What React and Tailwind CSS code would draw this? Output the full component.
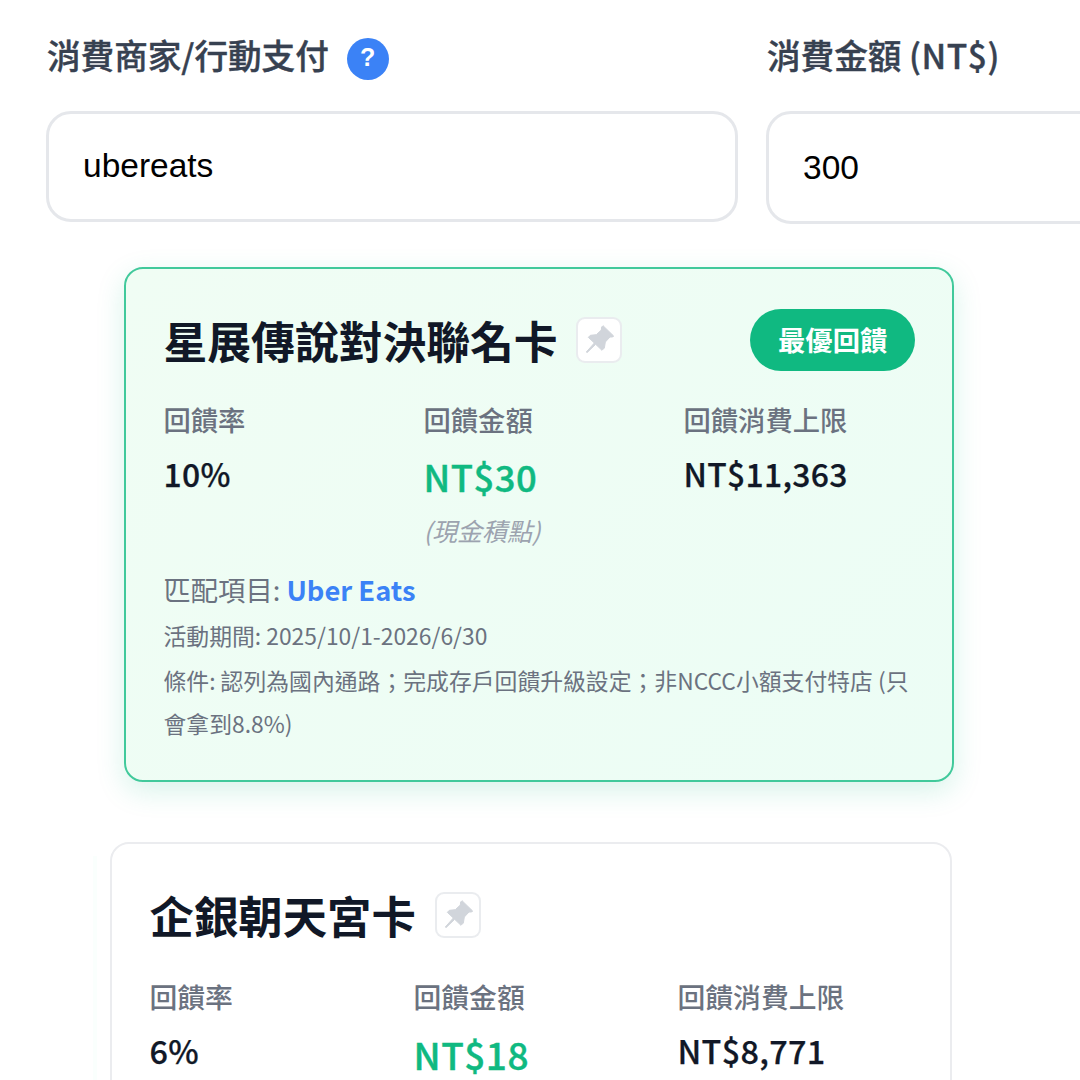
function PinIcon() {
  return (
    <svg width="30" height="30" viewBox="0 0 90 90" fill="currentColor" stroke="currentColor" strokeWidth="3" strokeLinejoin="round">
      <path d="M57 2 L89 33 L86 36 L78 36 L64 51 L61 69 L54 76 L35 58 L9 83 L7 81 L31 54 L13 37 L19 31 L37 29 L52 15 L53 6 Z" />
    </svg>
  );
}

function PinButton() {
  return (
    <button className="flex h-[46px] w-[46px] shrink-0 items-center justify-center rounded-[9px] border-2 border-[#e5e7eb]/80 bg-white text-[#d1d5db]">
      <PinIcon />
    </button>
  );
}

function BestCard() {
  return (
    <div className="mt-[43px] ml-[124px] h-[515px] w-[830px] rounded-[19px] border-2 border-[#41c99b] bg-linear-135 from-[#f0fdf4] to-[#ecfdf5] pt-[38px] pl-[37.5px] shadow-[0_9px_28px_rgba(16,185,129,0.17)]">
      <div className="flex h-[66px] items-center">
        <h3 className="text-[43.8px] leading-[66px] font-bold text-[#111827]">星展傳說對決聯名卡</h3>
        <div className="ml-[18.5px]">
          <PinButton />
        </div>
        <span className="ml-[128px] flex h-[62px] w-[165px] items-center justify-center rounded-full bg-[#10b981] pb-px text-[27.3px] font-bold text-white">
          最優回饋
        </span>
      </div>

      <div className="mt-[26px] grid grid-cols-[260px_260px_230px] text-[#111827]">
        <div>
          <div className="text-[27.3px] leading-[40px] font-medium text-[#6b7280]">回饋率</div>
          <div className="mt-[9px] text-[31.9px] leading-[50px] font-medium tracking-[0.3px] [-webkit-text-stroke:0.25px]">
            10%
          </div>
        </div>
        <div>
          <div className="text-[27.3px] leading-[40px] font-medium text-[#6b7280]">回饋金額</div>
          <div className="mt-[9px] text-[36.4px] leading-[56px] font-medium tracking-[0.5px] text-[#10b981] [-webkit-text-stroke:0.4px]">
            NT$30
          </div>
          <div className="mt-[6px] text-[25px] leading-[40px] text-[#9ca3af] italic">(現金積點)</div>
        </div>
        <div>
          <div className="text-[27.3px] leading-[40px] font-medium text-[#6b7280]">回饋消費上限</div>
          <div className="mt-[9px] text-[31.9px] leading-[50px] font-medium tracking-[0.3px] [-webkit-text-stroke:0.25px]">
            NT$11,363
          </div>
        </div>
      </div>

      <div className="mt-[17px] text-[27.3px] leading-[44px] text-[#6b7280]">
        匹配項目: <span className="font-bold text-[#3b82f6]">Uber Eats</span>
      </div>
      <div className="mt-[3px] text-[22.83px] leading-[43px] text-[#6b7280]">活動期間: 2025/10/1-2026/6/30</div>
      <div className="mt-[2px] text-[22.83px] leading-[43px] text-[#6b7280]">
        條件: 認列為國內通路；完成存戶回饋升級設定；非NCCC小額支付特店 (只
        <br />
        會拿到8.8%)
      </div>
    </div>
  );
}

function CardItem() {
  return (
    <div className="h-[600px] w-[842px] rounded-[19px] border-2 border-[#ebecef] bg-white pt-[37px] pl-[37.5px]">
      <div className="flex h-[67px] items-center">
        <h3 className="text-[44.4px] leading-[67px] font-bold text-[#111827]">企銀朝天宮卡</h3>
        <div className="ml-[19.5px]">
          <PinButton />
        </div>
      </div>

      <div className="mt-[28px] grid grid-cols-[264px_264px_240px] text-[#111827]">
        <div>
          <div className="text-[27.8px] leading-[40px] font-medium text-[#6b7280]">回饋率</div>
          <div className="mt-[9px] text-[32.4px] leading-[50px] font-medium tracking-[0.3px] [-webkit-text-stroke:0.25px]">
            6%
          </div>
        </div>
        <div>
          <div className="text-[27.8px] leading-[40px] font-medium text-[#6b7280]">回饋金額</div>
          <div className="mt-[10px] text-[37px] leading-[56px] font-medium tracking-[0.5px] text-[#10b981] [-webkit-text-stroke:0.4px]">
            NT$18
          </div>
        </div>
        <div>
          <div className="text-[27.8px] leading-[40px] font-medium text-[#6b7280]">回饋消費上限</div>
          <div className="mt-[9px] text-[32.4px] leading-[50px] font-medium tracking-[0.3px] [-webkit-text-stroke:0.25px]">
            NT$8,771
          </div>
        </div>
      </div>
    </div>
  );
}

export default function App() {
  return (
    <div className="h-[1080px] w-[1080px] overflow-hidden bg-white font-['Noto_Sans_CJK_TC',sans-serif]">
      <div className="grid h-[224px] grid-cols-[692px_692px] gap-[28px] pl-[46px]">
        <div>
          <div className="flex h-[111px] items-center pl-px">
            <label className="-mt-[2px] text-[33.6px] leading-[50px] font-medium text-[#374151] [-webkit-text-stroke:0.4px]">
              消費商家/行動支付
            </label>
            <span className="mt-[6px] ml-[18px] flex h-[42px] w-[42px] items-center justify-center rounded-full bg-[#3b82f6] pb-px font-['Liberation_Sans',sans-serif] text-[25px] font-bold text-white">
              ?
            </span>
          </div>
          <input
            type="text"
            defaultValue="ubereats"
            className="block h-[111px] w-full rounded-[25px] border-3 border-[#e5e7eb] px-[34px] pb-px font-['Liberation_Sans',sans-serif] text-[33.5px] text-black"
          />
        </div>
        <div>
          <div className="flex h-[111px] items-center pl-px">
            <label className="-mt-[2px] text-[33.6px] leading-[50px] font-medium text-[#374151] [-webkit-text-stroke:0.4px]">
              消費金額 <span className="tracking-[0.6px]">(NT$)</span>
            </label>
          </div>
          <input
            type="text"
            defaultValue="300"
            className="block h-[113px] w-full rounded-[25px] border-3 border-[#e5e7eb] px-[34px] font-['Liberation_Sans',sans-serif] text-[33.5px] text-black"
          />
        </div>
      </div>

      <BestCard />

      <div className="mt-[60px] ml-[93px] flex">
        <div className="mt-[14px] mr-[13px] h-[600px] w-[4px] bg-[#fafffd]" />
        <CardItem />
      </div>
    </div>
  );
}
